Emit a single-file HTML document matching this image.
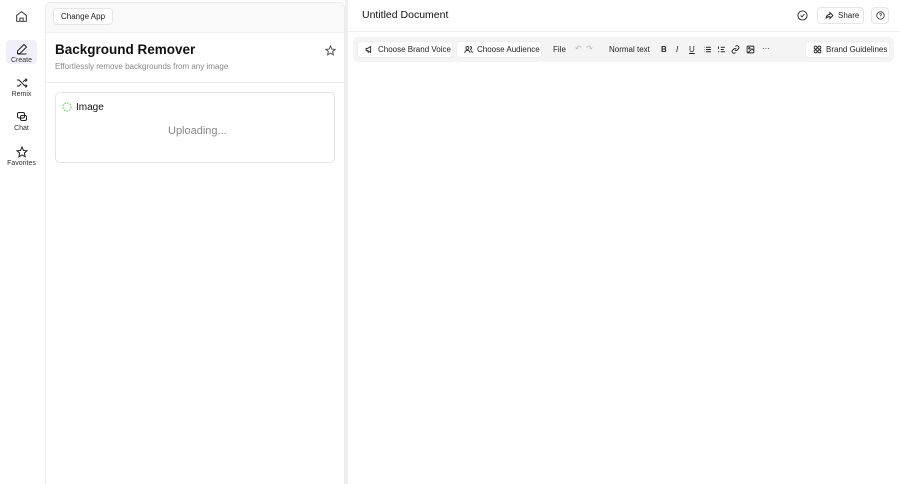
<!DOCTYPE html><html><head><style>
*{box-sizing:border-box;margin:0;padding:0}
html,body{width:900px;height:484px;overflow:hidden}
body{background:#fff;font-family:"Liberation Sans",sans-serif;color:#111;position:relative}
.sb{position:absolute;left:0;top:0;width:44px;height:484px;background:#fff}
.it{position:absolute;left:6px;width:31px;text-align:center;font-size:7px;color:#333}
.it svg{display:block;margin:0 auto 2px}
.lp{position:absolute;left:45px;top:2px;width:300px;height:500px;border:1px solid #ececec;border-radius:6px;background:#fff;overflow:hidden}
.lp .top{height:30px;background:#f9f9f9;border-bottom:1px solid #eee}
.btn{position:absolute;border:1px solid #e6e6e6;border-radius:4px;background:#fff;font-size:8px;color:#222;display:flex;align-items:center;gap:4px;padding:0 7px;white-space:nowrap}
.btn svg{flex-shrink:0}
.div{position:absolute;left:345px;top:0;width:3px;height:484px;background:#efefef}
.tb{position:absolute;left:353px;top:37px;width:541px;height:25px;background:#f4f4f4;border-radius:5px}
.t{position:absolute;font-size:8px;color:#222}
.ic{position:absolute;top:45px}
</style></head><body>
<div class="sb">
<svg style="position:absolute;left:15px;top:10px" width="13" height="13" viewBox="0 0 24 24" fill="none" stroke="#444" stroke-width="2"><path d="M3 10l9-7 9 7v10a1 1 0 0 1-1 1H4a1 1 0 0 1-1-1z"/><path d="M9 21v-6h6v6"/></svg>
<div class="it" style="top:40px;height:24px;background:#f0effa;border-radius:4px;padding-top:3px"><svg width="12" height="12" viewBox="0 0 24 24" fill="none" stroke="#222" stroke-width="2"><path d="M16 3l5 5L8 21H3v-5z"/><path d="M3 22h18"/></svg>Create</div>
<div class="it" style="top:77px"><svg width="12" height="12" viewBox="0 0 24 24" fill="none" stroke="#222" stroke-width="2"><path d="M2 6h4l12 12h4M2 18h4l4-4M14 10l4-4h4M19 3l3 3-3 3M19 15l3 3-3 3"/></svg>Remix</div>
<div class="it" style="top:111px"><svg width="12" height="12" viewBox="0 0 24 24" fill="none" stroke="#222" stroke-width="2"><rect x="3" y="3" width="14" height="11" rx="3"/><rect x="9" y="9" width="12" height="10" rx="3"/></svg>Chat</div>
<div class="it" style="top:146px;left:4px;width:35px"><svg width="12" height="12" viewBox="0 0 24 24" fill="none" stroke="#222" stroke-width="2"><path d="M12 2l3 7 7 .6-5.3 4.6 1.6 7.3L12 17.8 5.7 21.5l1.6-7.3L2 9.6 9 9z"/></svg>Favorites</div>
</div>
<div class="lp"><div class="top"></div>
<div style="position:absolute;left:0;top:79px;width:300px;border-top:1px solid #eee"></div>
</div>
<div class="btn" style="left:53px;top:8px;height:17px">Change App</div>
<div style="position:absolute;left:55px;top:42px;font-size:13.5px;font-weight:bold">Background Remover</div>
<div style="position:absolute;left:55px;top:62px;font-size:8px;color:#888">Effortlessly remove backgrounds from any image</div>
<svg style="position:absolute;left:325px;top:45px" width="11" height="11" viewBox="0 0 24 24" fill="none" stroke="#444" stroke-width="2"><path d="M12 2l3 7 7 .6-5.3 4.6 1.6 7.3L12 17.8 5.7 21.5l1.6-7.3L2 9.6 9 9z"/></svg>
<div style="position:absolute;left:55px;top:92px;width:280px;height:71px;border:1px solid #e4e4e4;border-radius:5px"></div>
<svg style="position:absolute;left:62px;top:102px" width="10" height="10" viewBox="0 0 10 10"><circle cx="5" cy="5" r="4" fill="none" stroke="#7c7" stroke-width="1.2" stroke-dasharray="1.5 1.2"/></svg>
<div style="position:absolute;left:76px;top:102px;font-size:10px">Image</div>
<div style="position:absolute;left:168px;top:125px;font-size:11px;color:#888">Uploading...</div>
<div class="div"></div>
<div style="position:absolute;left:348px;top:31px;width:552px;border-top:1px solid #f0f0f0"></div>
<div style="position:absolute;left:362px;top:9px;font-size:10.5px">Untitled Document</div>
<svg style="position:absolute;left:797px;top:10px" width="11" height="11" viewBox="0 0 24 24" fill="none" stroke="#222" stroke-width="2"><circle cx="12" cy="12" r="10"/><path d="M8 12l3 3 5-6"/></svg>
<div class="btn" style="left:817px;top:7px;height:17px;width:47px"><svg width="9" height="9" viewBox="0 0 24 24" fill="none" stroke="#222" stroke-width="2.4"><path d="M13 4l8 8-8 8v-5c-5 0-8 1-10 5 0-6 3-10 10-11z"/></svg>Share</div>
<div class="btn" style="left:871px;top:7px;height:17px;width:18px;padding:0;justify-content:center"><svg width="9" height="9" viewBox="0 0 24 24" fill="none" stroke="#222" stroke-width="2"><circle cx="12" cy="12" r="10"/><path d="M9.5 9a2.5 2.5 0 1 1 3 2.5V14M12 17v.5"/></svg></div>
<div class="tb"></div>
<div class="btn" style="left:357px;top:41px;height:17px;width:96px;border-color:#eee"><svg width="9" height="9" viewBox="0 0 24 24" fill="none" stroke="#222" stroke-width="2.4"><path d="M3 9h4l8-5v16l-8-5H3zM7 15l2 6"/></svg>Choose Brand Voice</div>
<div class="btn" style="left:456px;top:41px;height:17px;width:86px;border-color:#eee"><svg width="9" height="9" viewBox="0 0 24 24" fill="none" stroke="#222" stroke-width="2.4"><circle cx="9" cy="8" r="4"/><path d="M2 21a7 7 0 0 1 14 0M16 4a4 4 0 0 1 0 8M18 15a6 6 0 0 1 4 6"/></svg>Choose Audience</div>
<div class="t" style="left:553px;top:45px">File</div>
<div class="t" style="left:575px;top:44px;color:#bbb">↶&nbsp;&nbsp;↷</div>
<div class="t" style="left:609px;top:45px">Normal text</div>
<div class="t" style="left:661px;top:45px;font-weight:bold">B</div>
<div class="t" style="left:676px;top:45px;font-style:italic">I</div>
<div class="t" style="left:689px;top:45px;text-decoration:underline">U</div>
<svg class="ic" style="left:703px" width="9" height="9" viewBox="0 0 24 24" fill="none" stroke="#222" stroke-width="2.4"><path d="M8 6h13M8 12h13M8 18h13M3 6h1M3 12h1M3 18h1"/></svg>
<svg class="ic" style="left:717px" width="9" height="9" viewBox="0 0 24 24" fill="none" stroke="#222" stroke-width="2.4"><path d="M10 6h11M10 12h8M10 18h11M4 4v6M3 18h3"/></svg>
<svg class="ic" style="left:731px" width="9" height="9" viewBox="0 0 24 24" fill="none" stroke="#222" stroke-width="2.4"><path d="M10 13a5 5 0 0 0 7 0l3-3a5 5 0 0 0-7-7l-1 1M14 11a5 5 0 0 0-7 0l-3 3a5 5 0 0 0 7 7l1-1"/></svg>
<svg class="ic" style="left:746px" width="9" height="9" viewBox="0 0 24 24" fill="none" stroke="#222" stroke-width="2.4"><rect x="3" y="3" width="18" height="18" rx="2"/><circle cx="9" cy="9" r="2"/><path d="M21 15l-5-5L5 21"/></svg>
<div class="t" style="left:762px;top:44px">···</div>
<div class="btn" style="left:805px;top:41px;height:17px;width:85px;border-color:#eee"><svg width="9" height="9" viewBox="0 0 24 24" fill="none" stroke="#222" stroke-width="2.4"><circle cx="7" cy="7" r="4"/><circle cx="17" cy="7" r="4"/><circle cx="7" cy="17" r="4"/><circle cx="17" cy="17" r="4"/></svg>Brand Guidelines</div>
</body></html>
